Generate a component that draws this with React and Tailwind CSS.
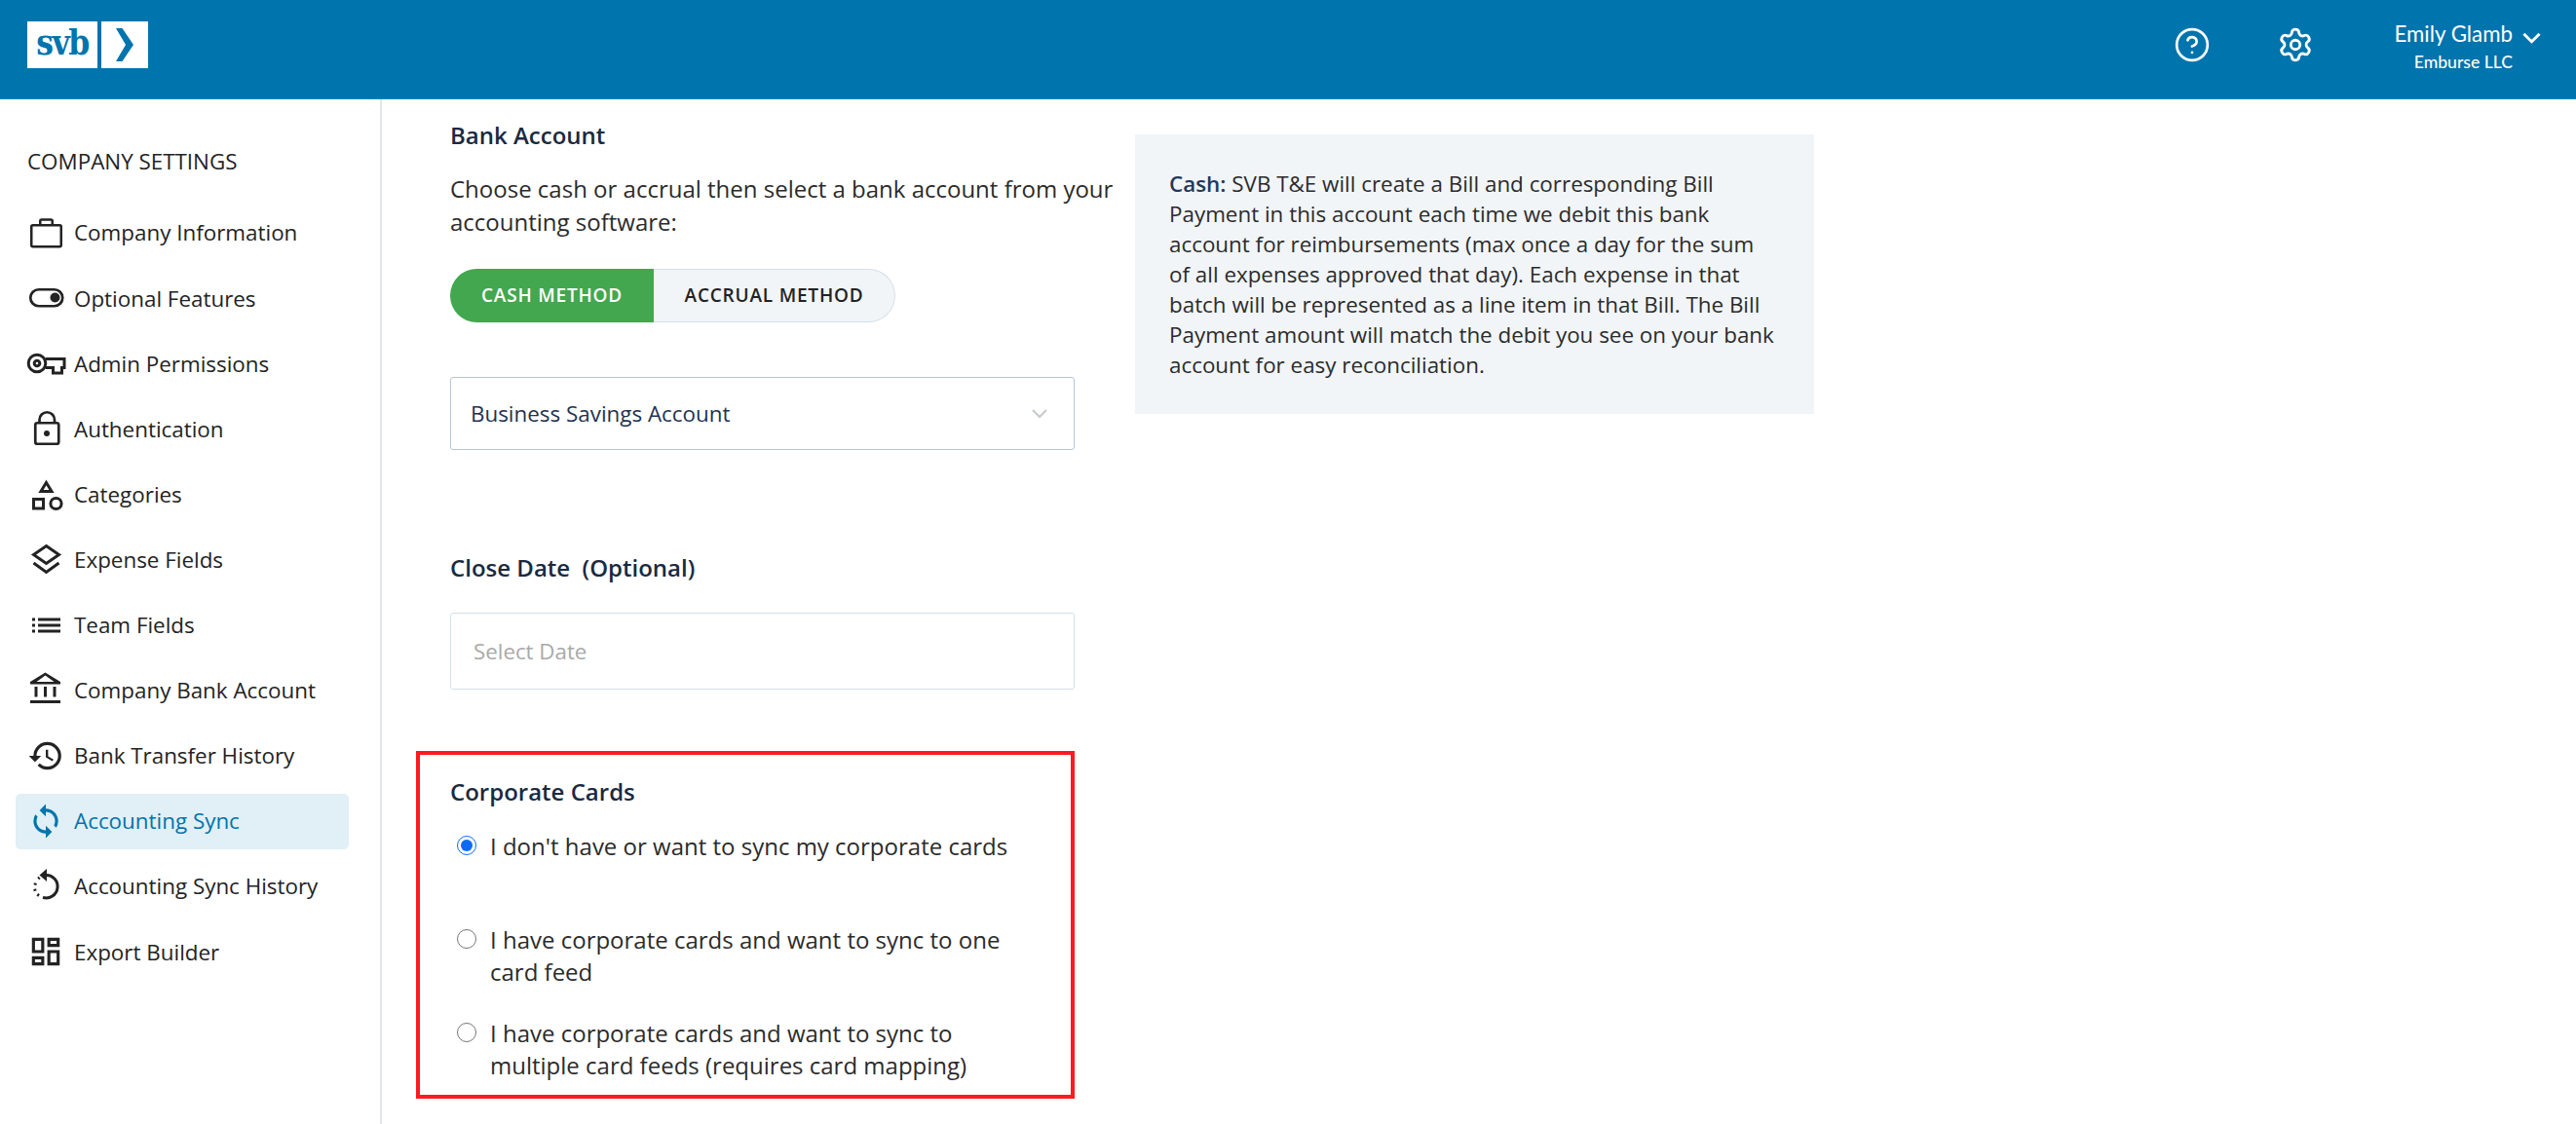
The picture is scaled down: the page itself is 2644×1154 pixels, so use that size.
import React from 'react';
import { MdHistory, MdSync, MdOutlineDashboard } from 'react-icons/md';
import { Settings, CircleHelp } from 'lucide-react';

const Briefcase = () => (
  <svg viewBox="0 0 40 32" className="w-10 h-8 overflow-visible" fill="none" stroke="currentColor" strokeWidth="2.5">
    <rect x="5.25" y="8.25" width="30.5" height="22" rx="1.5" />
    <path d="M14.25 8V4a1.5 1.5 0 0 1 1.5-1.5h9.5a1.5 1.5 0 0 1 1.5 1.5v4" />
  </svg>
);

const Toggle = () => (
  <svg viewBox="0 0 40 32" className="w-10 h-8 overflow-visible" fill="none" stroke="currentColor" strokeWidth="2.7">
    <rect x="4.25" y="7.25" width="33" height="17" rx="8.5" />
    <circle cx="29.5" cy="15.5" r="5" fill="currentColor" stroke="none" />
  </svg>
);

const Key = () => (
  <svg viewBox="0 0 40 32" className="w-10 h-8 overflow-visible" fill="none" stroke="currentColor" strokeWidth="3">
    <circle cx="11" cy="16" r="8.8" />
    <circle cx="11" cy="16" r="2.8" />
    <path d="M19.5 11.5H39V20.5H36.5V26H27.5V20.5H19.5" />
  </svg>
);

const Lock = () => (
  <svg viewBox="0 0 40 32" className="w-10 h-8 overflow-visible" fill="none" stroke="currentColor" strokeWidth="2.7">
    <rect x="9.25" y="9.25" width="24" height="21.5" rx="2" />
    <path d="M13.5 9V6a7.7 7.7 0 0 1 15.5 0v3" />
    <circle cx="21" cy="20" r="3" fill="currentColor" stroke="none" />
  </svg>
);

const Shapes = () => (
  <svg viewBox="0 0 40 32" className="w-10 h-8 overflow-visible" fill="none" stroke="currentColor" strokeWidth="3">
    <path d="M20.5 3.5L26 12.5H15Z" />
    <rect x="7.5" y="20.5" width="10" height="9.5" />
    <circle cx="30.5" cy="25" r="5.6" />
  </svg>
);

const Layers = () => (
  <svg viewBox="0 0 40 32" className="w-10 h-8 overflow-visible" fill="none" stroke="currentColor" strokeWidth="3">
    <path d="M20.5 1.5L33.5 10.5L20.5 19.5L7.5 10.5Z" />
    <path d="M7.5 19L20.5 28.5L33.5 19" />
  </svg>
);

const ListLines = () => (
  <svg viewBox="0 0 40 32" className="w-10 h-8 overflow-visible" fill="currentColor">
    <rect x="6" y="8.5" width="3" height="3" />
    <rect x="6" y="14.5" width="3" height="3" />
    <rect x="6" y="20.5" width="3" height="3" />
    <rect x="12" y="8.5" width="23" height="3" />
    <rect x="12" y="14.5" width="23" height="3" />
    <rect x="12" y="20.5" width="23" height="3" />
  </svg>
);

const Bank = () => (
  <svg viewBox="0 0 40 32" className="w-10 h-8 overflow-visible" fill="currentColor">
    <path d="M19.5 -2.5L35 7V9.5H4V7ZM19.5 0.5L10.5 7H28.5Z" fillRule="evenodd" />
    <rect x="8.5" y="12" width="3" height="10.5" />
    <rect x="18" y="12" width="3" height="10.5" />
    <rect x="27.5" y="12" width="3" height="10.5" />
    <rect x="4" y="26" width="31" height="3" />
  </svg>
);

const SyncHistory = () => (
  <svg viewBox="0 0 40 32" className="w-10 h-8 overflow-visible" fill="none" stroke="currentColor" strokeWidth="3">
    <path d="M20 4.5A11.7 11.7 0 1 1 17 27.4" />
    <path d="M21 -2V11L13.5 4.5Z" fill="currentColor" stroke="none" />
    <path d="M13.6 6.8L12.2 8.1M9.4 12.6L8.9 14.6M8.6 18.8L9.2 20.8M11.3 24.3L13 25.5" />
  </svg>
);

const MdIcon = ({ Icon }) => (
  <span className="w-10 h-8 flex items-center justify-center">
    <Icon className="w-[38px] h-[38px] shrink-0" />
  </span>
);

const navItems = [
  { label: 'Company Information', icon: <Briefcase /> },
  { label: 'Optional Features', icon: <Toggle /> },
  { label: 'Admin Permissions', icon: <Key /> },
  { label: 'Authentication', icon: <Lock /> },
  { label: 'Categories', icon: <Shapes /> },
  { label: 'Expense Fields', icon: <Layers /> },
  { label: 'Team Fields', icon: <ListLines /> },
  { label: 'Company Bank Account', icon: <Bank /> },
  { label: 'Bank Transfer History', icon: <MdIcon Icon={MdHistory} /> },
  { label: 'Accounting Sync', icon: <MdIcon Icon={MdSync} />, active: true },
  { label: 'Accounting Sync History', icon: <SyncHistory /> },
  { label: 'Export Builder', icon: <MdIcon Icon={MdOutlineDashboard} /> },
];

const Header = () => (
  <header className="h-[102px] shrink-0 bg-[#0074ad] border-b border-[#1a86bb] flex items-start justify-between pl-[28px] font-['Lato',sans-serif] text-white">
    <div className="flex gap-[4px] mt-[22px]">
      <div className="w-[72px] h-[48px] bg-white flex items-center justify-center text-[#0074ad] font-['DejaVu_Serif_Condensed','DejaVu_Serif',serif] font-bold text-[35px] tracking-[-1.5px] leading-none pb-[5px]">
        svb
      </div>
      <div className="w-[48px] h-[48px] bg-white flex items-center justify-center">
        <svg viewBox="0 0 18 34" className="w-[18px] h-[34px]" fill="#0074ad">
          <path d="M0 0H6.5L18 17L6.5 34H0L10 17Z" />
        </svg>
      </div>
    </div>
    <div className="flex items-start">
      <CircleHelp className="w-[38px] h-[38px] mt-[27px]" strokeWidth={1.7} />
      <Settings className="w-[38px] h-[38px] mt-[27px] ml-[68px]" strokeWidth={1.8} />
      <div className="ml-[82px] mt-[21px] flex flex-col items-end w-[122px]">
        <span className="text-[22.3px] leading-[28px] whitespace-nowrap">Emily Glamb</span>
        <span className="text-[17.6px] leading-[24px] mt-[3px] font-medium whitespace-nowrap">Emburse LLC</span>
      </div>
      <svg viewBox="0 0 20 12" className="w-[19px] h-[12px] mt-[33px] ml-[10px] mr-[36px]" fill="none" stroke="white" strokeWidth="3">
        <path d="M1.5 1.5L10 10L18.5 1.5" />
      </svg>
    </div>
  </header>
);

const Sidebar = () => (
  <aside className="w-[392px] shrink-0 border-r-2 border-[#dfe6ec] pt-[47px] text-[#232323]">
    <div className="pl-[28px] text-[22.4px] leading-[34px]">COMPANY SETTINGS</div>
    <nav className="mt-[27.8px] ml-[16px] w-[342px] flex flex-col gap-[10.1px]">
      {navItems.map((item) => (
        <div
          key={item.label}
          className={`h-[57px] pl-[11px] flex items-center gap-[9px] rounded-[5px] text-[22.4px] ${item.active ? 'bg-[#e1eff7] text-[#0074ad]' : ''}`}
        >
          {item.icon}
          <span className="whitespace-nowrap">{item.label}</span>
        </div>
      ))}
    </nav>
  </aside>
);

const RadioRow = ({ checked, className, children }) => (
  <label className={`flex items-start pl-[7px] gap-[14px] ${className || ''}`}>
    <input
      type="radio"
      name="corporate-cards"
      defaultChecked={checked}
      className="w-[20px] h-[20px] m-0 mt-[6px] shrink-0 accent-[#0b6bf2]"
    />
    <span className="w-[540px] text-[24px] leading-[33px] text-[#2b2b2b]">{children}</span>
  </label>
);

const Main = () => (
  <main className="flex items-start pl-[70px]">
    <div className="w-[641px] pt-[20px]">
      <h2 className="text-[24px] leading-[34px] font-semibold text-[#1a2a3f]">Bank Account</h2>
      <p className="mt-[21px] w-[690px] text-[24px] leading-[34px] text-[#2b2b2b]">
        Choose cash or accrual then select a bank account from your accounting software:
      </p>
      <div className="mt-[31px] w-[457px] h-[55px] flex text-[19px] font-semibold tracking-[0.8px]">
        <div className="w-[209px] bg-[#43a74f] text-white rounded-l-full flex items-center justify-center">CASH METHOD</div>
        <div className="flex-1 bg-[#f1f5f8] text-[#232323] border border-l-0 border-[#d5dfe8] rounded-r-full flex items-center justify-center">ACCRUAL METHOD</div>
      </div>
      <div className="mt-[56px] h-[75px] border border-[#b7c6d6] rounded-[3px] pl-[20px] pr-[27px] flex items-center justify-between text-[22.4px] text-[#1f3350]">
        <span>Business Savings Account</span>
        <svg viewBox="0 0 16 10" className="w-[16px] h-[10px]" fill="none" stroke="#c4c9cd" strokeWidth="2">
          <path d="M1 1L8 8L15 1" />
        </svg>
      </div>
      <h2 className="mt-[104px] text-[24px] leading-[34px] font-semibold text-[#1a2a3f] whitespace-pre">Close Date  (Optional)</h2>
      <div className="mt-[29px] h-[79px] border border-[#d5dfe8] rounded-[3px] pl-[23px] flex items-center text-[22.3px] text-[#a9a9a9]">
        Select Date
      </div>
      <section className="mt-[63px] -ml-[35px] w-[676px] h-[357px] border-4 border-[#ff1a1f] pl-[31px] pt-[21px]">
        <h2 className="text-[24px] leading-[34px] font-semibold text-[#1a2a3f]">Corporate Cards</h2>
        <RadioRow checked className="mt-[21.5px]">I don't have or want to sync my corporate cards</RadioRow>
        <RadioRow className="mt-[63px]">I have corporate cards and want to sync to one card feed</RadioRow>
        <RadioRow className="mt-[30px]">I have corporate cards and want to sync to multiple card feeds (requires card mapping)</RadioRow>
      </section>
    </div>
    <aside className="ml-[62px] mt-[36px] w-[697px] h-[287px] bg-[#f1f5f8] pl-[35px] pt-[35px] text-[22.4px] leading-[31px] text-[#2b2b2b]">
      <p className="w-[623px]">
        <strong className="font-semibold text-[#1f3a5a]">Cash:</strong> SVB T&amp;E will create a Bill and corresponding Bill Payment in this account each time we debit this bank account for reimbursements (max once a day for the sum of all expenses approved that day). Each expense in that batch will be represented as a line item in that Bill. The Bill Payment amount will match the debit you see on your bank account for easy reconciliation.
      </p>
    </aside>
  </main>
);

export default function App() {
  return (
    <div className="h-screen overflow-hidden flex flex-col bg-white font-['Open_Sans',sans-serif]">
      <Header />
      <div className="flex flex-1 min-h-0">
        <Sidebar />
        <Main />
      </div>
    </div>
  );
}
